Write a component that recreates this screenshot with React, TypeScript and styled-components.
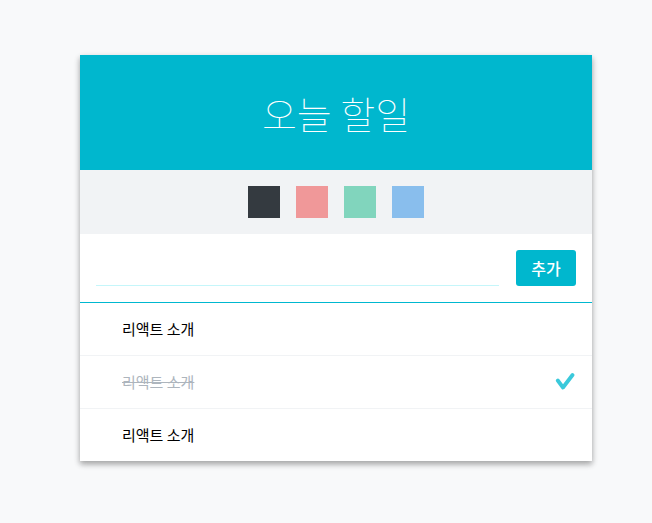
import React from "react";
import styled, { createGlobalStyle } from "styled-components";

const Global = createGlobalStyle`
  html, body { margin: 0; padding: 0; background: #f8f9fa; }
  body { font-family: "Noto Sans CJK KR", "Noto Sans", sans-serif; }
`;

const Page = styled.div`
  padding: 55px 0 0 80px;
  min-height: 523px;
  box-sizing: border-box;
`;

const Card = styled.div`
  width: 512px;
  background: white;
  box-shadow: 0 3px 6px rgba(0, 0, 0, 0.16), 0 3px 6px rgba(0, 0, 0, 0.23);
`;

const Title = styled.div`
  height: 115px;
  display: flex;
  align-items: center;
  justify-content: center;
  background: #00b7ce;
  color: white;
  font-size: 38px;
  font-weight: 100;
  padding-top: 0;
`;

const Palette = styled.div`
  height: 64px;
  background: #f1f3f5;
  display: flex;
  align-items: center;
  justify-content: center;
  gap: 16px;
`;

const Swatch = styled.div<{ $color: string; $active?: boolean }>`
  width: 32px;
  height: 32px;
  background: ${(p) => p.$color};
  opacity: ${(p) => (p.$active ? 1 : 0.5)};
`;

const FormWrapper = styled.div`
  padding: 16px 16px 16px 16px;
  height: 68px;
  box-sizing: content-box;
  padding: 0 16px;
  display: flex;
  align-items: center;
  border-bottom: 1px solid #00b8d0;
`;

const Form = styled.div`
  flex: 1;
  display: flex;
  align-items: stretch;
  height: 36px;
`;

const Input = styled.input`
  flex: 1;
  font-size: 20px;
  outline: none;
  border: none;
  border-bottom: 1px solid #c5f6fa;
  background: transparent;
  font-family: inherit;
  padding: 0;
`;

const Button = styled.div`
  width: 60px;
  margin-left: 17px;
  background: #00b7ce;
  border-radius: 3px;
  color: white;
  font-weight: 500;
  font-size: 16px;
  display: flex;
  align-items: center;
  justify-content: center;
`;

const Item = styled.div`
  height: 52px;
  padding: 0 16px;
  display: flex;
  align-items: center;
  & + & { border-top: 1px solid #f1f3f5; }
`;

const Remove = styled.div`
  width: 10px;
  margin-right: 16px;
  opacity: 0;
`;

const Text = styled.div<{ $checked?: boolean }>`
  flex: 1;
  font-size: 15px;
  line-height: 20px;
  color: ${(p) => (p.$checked ? "#adb5bd" : "#000")};
  text-decoration: ${(p) => (p.$checked ? "line-through" : "none")};
`;

const Check = styled.svg`
  width: 20px;
  height: 20px;
  margin-right: 1px;
`;

const todos = [
  { text: "리액트 소개", checked: false },
  { text: "리액트 소개", checked: true },
  { text: "리액트 소개", checked: false },
];

export default function App() {
  return (
    <>
      <Global />
      <Page>
        <Card>
          <Title>오늘 할일</Title>
          <Palette>
            <Swatch $color="#343a40" $active />
            <Swatch $color="#f03e3e" />
            <Swatch $color="#12b886" />
            <Swatch $color="#228ae6" />
          </Palette>
          <FormWrapper>
            <Form>
              <Input />
              <Button>추가</Button>
            </Form>
          </FormWrapper>
          {todos.map((t, i) => (
            <Item key={i}>
              <Remove>×</Remove>
              <Text $checked={t.checked}>{t.text}</Text>
              {t.checked && (
                <Check viewBox="0 0 20 20">
                  <path
                    d="M2.8 8.5 L8 15.5 L17.5 3"
                    fill="none"
                    stroke="#3bc9db"
                    strokeWidth="3.8"
                    strokeLinecap="round"
                    strokeLinejoin="round"
                  />
                </Check>
              )}
            </Item>
          ))}
        </Card>
      </Page>
    </>
  );
}
